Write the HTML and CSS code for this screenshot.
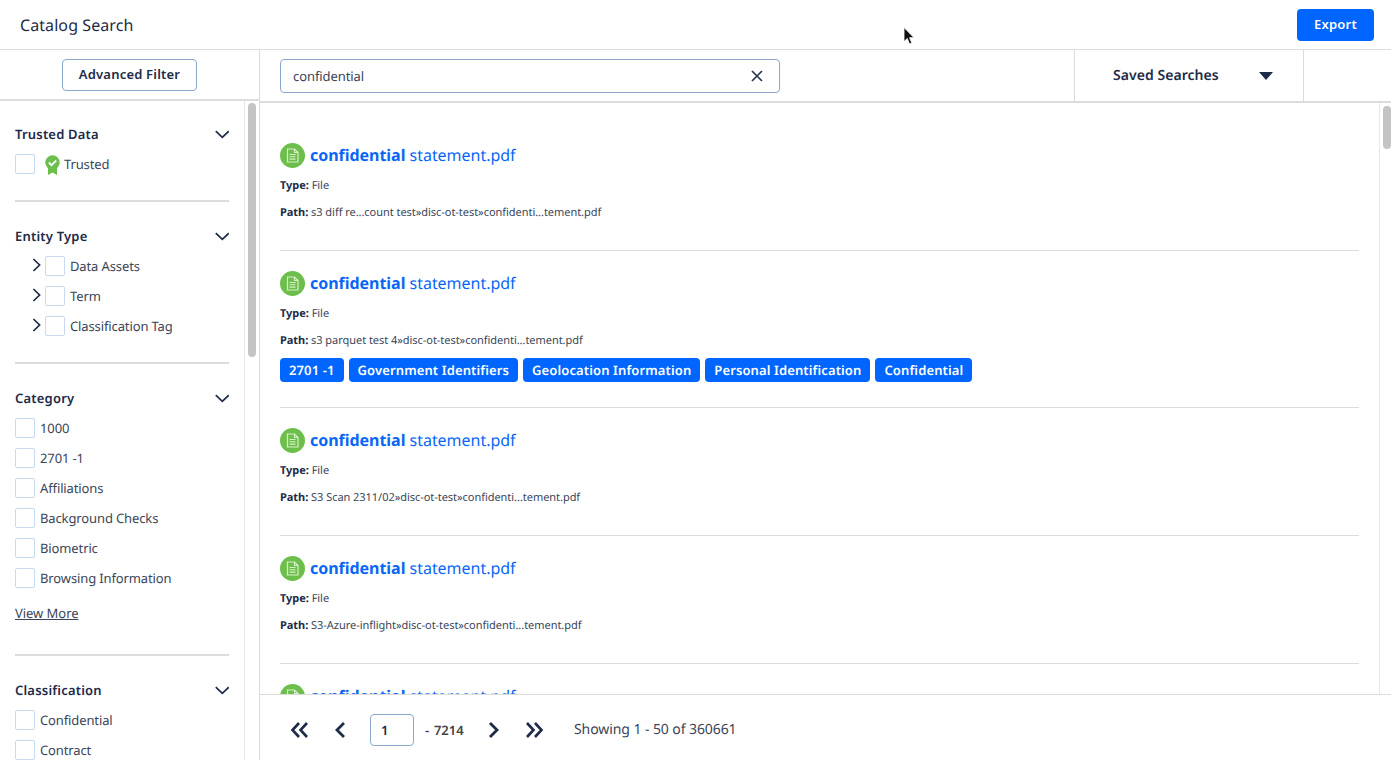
FILE: index.html
```html
<!DOCTYPE html>
<html lang="en">
<head>
<meta charset="utf-8">
<title>Catalog Search</title>
<link rel="stylesheet" href="styles.css">
</head>
<body>
<svg class="defs" width="0" height="0" aria-hidden="true">
  <symbol id="chev-down" viewBox="0 0 14 9"><path d="M.8 1.200 7.300 7.400 13.800 1.200" fill="none" stroke="currentColor" stroke-width="1.7"/></symbol>
  <symbol id="chev-right" viewBox="0 0 9 14"><path d="M1.4 1 7.600 7 1.400 13" fill="none" stroke="currentColor" stroke-width="1.7"/></symbol>
  <symbol id="file" viewBox="0 0 25 25">
    <circle cx="12.5" cy="12.5" r="12.5" fill="#6cbf4b"/>
    <path d="M7.5 6h7l3.5 3.5V19h-10.500z" fill="none" stroke="#d8f0cc" stroke-width="1.200"/>
    <path d="M14.500 6v3.500H18M9.500 11.500h6M9.500 13.800h6M9.500 16.100h6" fill="none" stroke="#d8f0cc" stroke-width="1.100"/>
  </symbol>
  <symbol id="pg-one" viewBox="0 0 12 18"><path d="M10 2 3 9l7 7" fill="none" stroke="currentColor" stroke-width="2.800"/></symbol>
  <symbol id="pg-two" viewBox="0 0 19 18"><path d="M9 2 2.500 9 9 16M17 2 10.500 9 17 16" fill="none" stroke="currentColor" stroke-width="2.600"/></symbol>
</svg>

<header class="topbar">
  <h1 class="page-title">Catalog Search</h1>
  <button class="btn-export">Export</button>
</header>

<div class="workspace">
  <aside class="sidebar">
    <div class="adv-row"><button class="btn-adv">Advanced Filter</button></div>
    <div class="side-body">
      <div class="filters">
        <section class="fsec">
          <div class="fhead"><span>Trusted Data</span><svg class="ic-down"><use href="#chev-down"/></svg></div>
          <label class="fitem"><span class="check"></span>
            <svg class="badge" viewBox="0 0 15 20"><path d="M3 12v8l4.500-2.500 4.500 2.500v-8z" fill="#6cbf4b"/><circle cx="7.500" cy="7.500" r="7.200" fill="#6cbf4b"/><path d="M3.800 7.500l2.700 2.700 4.700-4.700" fill="none" stroke="#fff" stroke-width="1.800"/></svg>
            <span class="trusted">Trusted</span></label>
        </section>
        <section class="fsec">
          <div class="fhead"><span>Entity Type</span><svg class="ic-down"><use href="#chev-down"/></svg></div>
          <label class="fitem tree"><svg class="ic-right"><use href="#chev-right"/></svg><span class="check"></span>Data Assets</label>
          <label class="fitem tree"><svg class="ic-right"><use href="#chev-right"/></svg><span class="check"></span>Term</label>
          <label class="fitem tree"><svg class="ic-right"><use href="#chev-right"/></svg><span class="check"></span>Classification Tag</label>
        </section>
        <section class="fsec fsec-more">
          <div class="fhead"><span>Category</span><svg class="ic-down"><use href="#chev-down"/></svg></div>
          <label class="fitem"><span class="check"></span>1000</label>
          <label class="fitem"><span class="check"></span>2701 -1</label>
          <label class="fitem"><span class="check"></span>Affiliations</label>
          <label class="fitem"><span class="check"></span>Background Checks</label>
          <label class="fitem"><span class="check"></span>Biometric</label>
          <label class="fitem"><span class="check"></span>Browsing Information</label>
          <a class="view-more">View More</a>
        </section>
        <section class="fsec">
          <div class="fhead"><span>Classification</span><svg class="ic-down"><use href="#chev-down"/></svg></div>
          <label class="fitem"><span class="check"></span>Confidential</label>
          <label class="fitem"><span class="check"></span>Contract</label>
        </section>
      </div>
      <div class="track track-side"><div class="thumb thumb-side"></div></div>
    </div>
  </aside>

  <main class="content">
    <div class="searchbar">
      <div class="search-cell">
        <div class="search-box"><span class="search-text">confidential</span>
          <svg class="ic-x" viewBox="0 0 12 12"><path d="M1 1l10 10M11 1 1 11" stroke="currentColor" stroke-width="1.700" fill="none"/></svg>
        </div>
      </div>
      <div class="saved"><span>Saved Searches</span><span class="caret"></span></div>
      <div class="saved-tail"></div>
    </div>
    <div class="results-wrap">
      <div class="results">
        <article class="result">
          <div class="r-title"><svg class="r-icon"><use href="#file"/></svg><a><b>confidential</b> statement.pdf</a></div>
          <p class="r-type"><b>Type:</b> File</p>
          <p class="r-path"><b>Path:</b> s3 diff re...count test»disc-ot-test»confidenti...tement.pdf</p>
        </article>
        <article class="result has-tags">
          <div class="r-title"><svg class="r-icon"><use href="#file"/></svg><a><b>confidential</b> statement.pdf</a></div>
          <p class="r-type"><b>Type:</b> File</p>
          <p class="r-path"><b>Path:</b> s3 parquet test 4»disc-ot-test»confidenti...tement.pdf</p>
          <div class="tags"><span class="tag">2701 -1</span><span class="tag">Government Identifiers</span><span class="tag">Geolocation Information</span><span class="tag">Personal Identification</span><span class="tag">Confidential</span></div>
        </article>
        <article class="result">
          <div class="r-title"><svg class="r-icon"><use href="#file"/></svg><a><b>confidential</b> statement.pdf</a></div>
          <p class="r-type"><b>Type:</b> File</p>
          <p class="r-path"><b>Path:</b> S3 Scan 2311/02»disc-ot-test»confidenti...tement.pdf</p>
        </article>
        <article class="result">
          <div class="r-title"><svg class="r-icon"><use href="#file"/></svg><a><b>confidential</b> statement.pdf</a></div>
          <p class="r-type"><b>Type:</b> File</p>
          <p class="r-path"><b>Path:</b> S3-Azure-inflight»disc-ot-test»confidenti...tement.pdf</p>
        </article>
        <article class="result">
          <div class="r-title"><svg class="r-icon"><use href="#file"/></svg><a><b>confidential</b> statement.pdf</a></div>
          <p class="r-type"><b>Type:</b> File</p>
        </article>
      </div>
      <div class="track track-main"><div class="thumb thumb-main"></div></div>
    </div>
    <footer class="pager">
      <svg class="pg pg-2 first"><use href="#pg-two"/></svg>
      <svg class="pg pg-1 prev"><use href="#pg-one"/></svg>
      <div class="pg-input">1</div>
      <span class="pg-total">- &nbsp;7214</span>
      <svg class="pg pg-1 next"><use href="#pg-one"/></svg>
      <svg class="pg pg-2 last"><use href="#pg-two"/></svg>
      <span class="pg-info">Showing 1 - 50 of 360661</span>
    </footer>
  </main>
</div>

<svg class="cursor" viewBox="0 0 12 18"><path d="M1 0.500v14l3.300-3 2.200 5.500 2.300-1-2.200-5.300h4.400z" fill="#111" stroke="#fff" stroke-width="0.800"/></svg>
</body>
</html>
```
FILE: styles.css
```css
* { box-sizing: border-box; }
html, body { margin: 0; height: 760px; overflow: hidden; }
body {
  font-family: "Noto Sans", "Open Sans", sans-serif;
  color: #1d2b48;
  background: #fff;
  position: relative;
  text-rendering: geometricPrecision;
}
.defs { position: absolute; }

.topbar {
  height: 50px;
  border-bottom: 1px solid #dcdcdc;
  display: flex;
  align-items: center;
  justify-content: space-between;
  padding: 0 17px 0 20px;
}
.page-title { margin: 0; font-size: 16px; font-weight: 400; letter-spacing: 0.08px; }
.btn-export {
  width: 77px; height: 32px; padding: 0 0 2px;
  background: #0066ff; color: #fff; border: 0; border-radius: 4px;
  font: 600 13px "Noto Sans", sans-serif;
  letter-spacing: 0.2px;
}

.workspace { display: flex; height: 710px; }
.sidebar { width: 260px; border-right: 1px solid #dcdcdc; display: flex; flex-direction: column; flex: none; }
.adv-row {
  height: 51px; border-bottom: 2px solid #dcdcdc;
  display: flex; justify-content: center; padding-top: 9px;
}
.btn-adv {
  width: 135px; height: 32px; padding: 0 0 2px; background: #fff;
  border: 1px solid #8ba7c9; border-radius: 4px; color: #1d2b48;
  font: 600 13px "Noto Sans", sans-serif;
  letter-spacing: 0.2px;
}
.side-body { flex: 1; display: flex; min-height: 0; }
.filters { width: 244px; padding: 0 15px; overflow: hidden; flex: none; margin-top: -1px; }
.fsec { padding: 24px 0 21px; border-bottom: 2px solid #dcdcdc; }
.fsec-more { padding-bottom: 31px; }
.fsec:last-child { border-bottom: 0; }
.fhead {
  height: 20px; margin-bottom: 5px;
  display: flex; align-items: center; justify-content: space-between;
  font-size: 13px; font-weight: 600; letter-spacing: 0.2px;
}
.ic-down { width: 14px; height: 9px; color: #1d2b48; }
.ic-right { width: 9px; height: 14px; color: #1d2b48; margin-right: 4px; margin-top: -2px; flex: none; }
.fitem { height: 30px; display: flex; align-items: center; font-size: 13px; color: #3a4558; letter-spacing: -0.12px; }
.tree { padding-left: 17px; }
.check {
  width: 20px; height: 20px; flex: none; margin-right: 5px;
  border: 1px solid #c8daf0; border-radius: 2px; background: #fff;
}
.badge { width: 15px; height: 20px; margin: 1px 4px 0 5px; flex: none; }
.view-more { display: block; margin-top: 10px; height: 20px; line-height: 20px; font-size: 13px; color: #3a4558; text-decoration: underline; letter-spacing: -0.05px; }

.track { background: #fff; border-left: 1px solid #e6e6e6; flex: none; }
.thumb { background: #c4c4c4; border-radius: 4px; width: 8px; }
.track-side { width: 15px; padding: 2px 0 0 3px; }
.thumb-side { height: 254px; }
.track-main { width: 12px; padding: 3px 0 0 3px; }
.thumb-main { height: 43px; }

.content { flex: 1; min-width: 0; display: flex; flex-direction: column; }
.searchbar { height: 53px; flex: none; border-bottom: 2px solid #dcdcdc; display: flex; }
.search-cell { width: 814px; padding: 9px 0 0 20px; flex: none; }
.search-box {
  width: 500px; height: 34px; border: 1px solid #8ba7c9; border-radius: 4px;
  display: flex; align-items: center; justify-content: space-between;
  padding: 0 16px 0 12px;
}
.search-text { font-size: 13px; color: #3a4558; letter-spacing: -0.08px; }
.ic-x { width: 12px; height: 12px; color: #2a3750; }
.saved {
  width: 230px; flex: none; border-left: 1px solid #dcdcdc; border-right: 1px solid #dcdcdc;
  display: flex; align-items: center; justify-content: space-between;
  padding: 0 30px 1px 38px; font-size: 14px; font-weight: 600; letter-spacing: 0.05px;
}
.caret { width: 0; height: 0; border-left: 7px solid transparent; border-right: 7px solid transparent; border-top: 8px solid #1d2b48; margin-top: 2px; }
.saved-tail { flex: 1; }

.results-wrap { flex: 1; min-height: 0; display: flex; }
.results { flex: 1; min-width: 0; overflow: hidden; padding: 20px 20px 0; }
.result { padding: 20px 0 29px; border-bottom: 1px solid #dcdcdc; }
.result.has-tags { padding-bottom: 25px; }
.r-title { height: 25px; display: flex; align-items: center; font-size: 16px; color: #0a66f5; }
.r-title a { color: #0a66f5; margin-bottom: 2px; letter-spacing: -0.03px; }
.r-title b { font-weight: 700; }
.r-icon { width: 25px; height: 25px; margin-right: 5px; flex: none; }
.r-type, .r-path { margin: 0; height: 16px; line-height: 16px; font-size: 11px; letter-spacing: -0.04px; color: #3a4558; }
.r-type b, .r-path b { font-weight: 700; color: #1d2b48; }
.r-type { margin-top: 10px; }
.r-path { margin-top: 11px; }
.tags { display: flex; gap: 5px; margin-top: 9px; }
.tag {
  height: 24px; padding: 0 9px; border-radius: 4px; background: #0066ff; color: #fff;
  font-size: 13px; font-weight: 600; line-height: 24px; letter-spacing: 0.12px;
}

.pager {
  height: 66px; flex: none; background: #fff; border-top: 1px solid #dcdcdc;
  display: flex; align-items: center; padding: 4px 0 0 30px;
}
.pg { color: #1d2b48; flex: none; }
.pg-2 { width: 19px; height: 18px; }
.pg-1 { width: 12px; height: 18px; }
.prev { margin-left: 25px; }
.pg-input {
  width: 44px; height: 32px; margin-left: 24px;
  border: 1px solid #8ba7c9; border-radius: 4px;
  font-size: 13px; font-weight: 600; line-height: 30px; padding-left: 10px;
}
.pg-total { margin-left: 11px; font-size: 13px; font-weight: 600; color: #444; width: 63px; word-spacing: -1px; }
.next { transform: scaleX(-1); }
.last { transform: scaleX(-1); margin-left: 25px; }
.pg-info { margin-left: 30px; font-size: 14px; color: #3a4558; letter-spacing: -0.08px; }

.cursor { position: absolute; left: 903px; top: 27px; width: 12px; height: 18px; }
```
